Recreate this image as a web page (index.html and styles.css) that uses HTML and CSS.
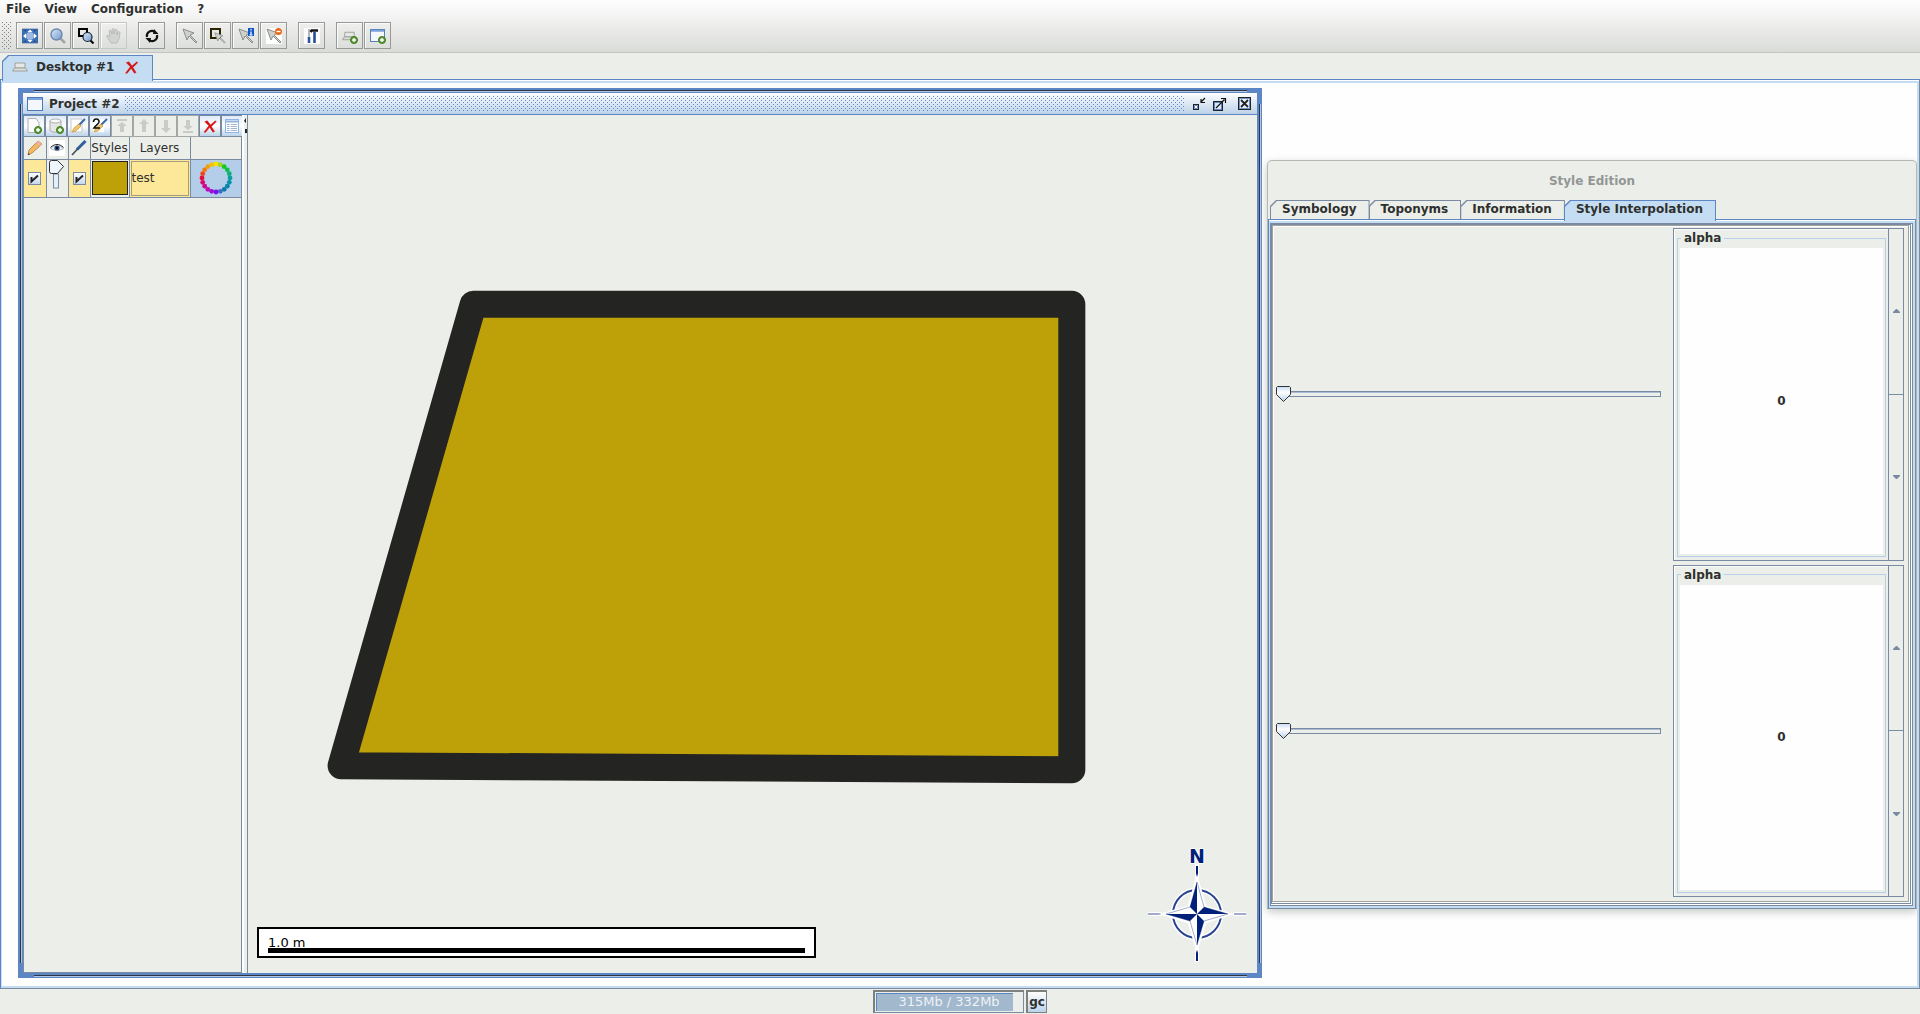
FILE: index.html
```html
<!DOCTYPE html>
<html lang="en">
<head>
<meta charset="utf-8">
<title>Desktop #1</title>
<link rel="stylesheet" href="styles.css">
</head>
<body>
<svg class="defs" aria-hidden="true">
  <defs>
    <linearGradient id="lens" x1="0" y1="0" x2="1" y2="1"><stop offset="0" stop-color="#dbe8f7"/><stop offset="1" stop-color="#6f9ad0"/></linearGradient>
    <symbol id="pointer" viewBox="0 0 16 16"><path d="M1 1l11 4-4 2 7 7-1 1-7-7-2 4z" fill="#cfd1cd" stroke="#8b8d89"/></symbol>
    <symbol id="cross" viewBox="0 0 16 16"><path d="M1 2l3-1 4 5 6-5 1 1-6 6 4 6-2 1-4-6-5 6-2 0 6-8z" fill="#d80f0f" stroke="#d80f0f" stroke-width=".6"/></symbol>
    <symbol id="plus" viewBox="0 0 8 8"><circle cx="4" cy="4" r="3.5" fill="#5d9b38" stroke="#3d7a1f"/><path d="M4 2v4M2 4h4" stroke="#fff" stroke-width="1.4"/></symbol>
    <symbol id="win" viewBox="0 0 16 14"><rect x=".5" y=".5" width="15" height="13" fill="#f4f7fb" stroke="#4d79b8"/><path d="M1 2h14" stroke="#7ba4dd" stroke-width="2"/></symbol>
    <symbol id="brush" viewBox="0 0 16 16"><path d="M15 1L8 8" stroke="#3a67a8" stroke-width="2"/><path d="M9 6l2 2-5 5-4 1 2-4z" fill="#efc572" stroke="#c68b1c" stroke-width=".6"/></symbol>
    <symbol id="tray" viewBox="0 0 16 10"><path d="M3 1h10v5H3z" fill="#e6e8e4" stroke="#9ea09c"/><path d="M2.500 6h11l2 3H.5z" fill="#dcdeda" stroke="#9ea09c"/></symbol>
  </defs>
</svg>

<header class="top">
  <nav class="menubar">
    <button>File</button><button>View</button><button>Configuration</button><button>?</button>
  </nav>
  <div class="toolbar">
    <span class="grip"></span>
    <div class="group">
      <button class="tool" aria-label="Zoom to full extent"><svg viewBox="0 0 16 16"><rect x="0" y="1" width="16" height="14" fill="#3e70b6" stroke="#2c5796" stroke-width=".6"/><circle cx="8" cy="8" r="4" fill="#9db9df"/><path d="M8 1.500l2.500 2.500h-5zM8 14.500l2.500-2.500h-5zM1 8l3-2.500v5zM15 8l-3-2.500v5z" fill="#fff"/><path d="M2 2h2v2M14 2h-2v2M2 14h2v-2M14 14h-2v-2" fill="#1e3d6d"/></svg></button>
      <button class="tool" aria-label="Zoom"><svg viewBox="0 0 16 16"><path d="M10 10l5 5" stroke="#a5a7a4" stroke-width="2.600"/><circle cx="6.500" cy="6.500" r="5.500" fill="url(#lens)" stroke="#6d88ab" stroke-width="1.400"/></svg></button>
      <button class="tool" aria-label="Zoom to area"><svg viewBox="0 0 16 16"><rect x="1" y="1" width="8" height="7" fill="none" stroke="#000" stroke-width="2"/><path d="M12 12l3.500 3.500" stroke="#000" stroke-width="2"/><circle cx="9.500" cy="9" r="4.500" fill="url(#lens)" stroke="#1c222b" stroke-width="1.200"/></svg></button>
      <button class="tool off" aria-label="Pan" disabled><svg viewBox="0 0 16 16"><path d="M5 15l-4-6c-1-2 1-2 2-1l1 1-1-6c0-1 2-1 2 0l1 3V2c0-2 2-2 2 0v4l1-4c0-1 2-1 2 0v5l1-3c1-1 2 0 2 1l-1 6-2 4z" fill="#d2d4d1" stroke="#b3b5b1" stroke-width=".8"/></svg></button>
    </div>
    <div class="group">
      <button class="tool" aria-label="Refresh"><svg viewBox="0 0 16 16"><path d="M3 9a5 5 0 0 1 8-5M13 7a5 5 0 0 1-8 5" fill="none" stroke="#111" stroke-width="2.200"/><path d="M10 1l4.500 5H9zM6 15l-4.500-5H7z" fill="#111"/></svg></button>
    </div>
    <div class="group">
      <button class="tool" aria-label="Select"><svg><use href="#pointer"/></svg></button>
      <button class="tool" aria-label="Select by rectangle"><svg viewBox="0 0 16 16"><rect x="1" y="1" width="9" height="9" fill="none" stroke="#2b2200" stroke-width="2"/><use href="#pointer" x="4" y="4" width="12" height="12"/></svg></button>
      <button class="tool" aria-label="Select with information"><svg viewBox="0 0 16 16"><use href="#pointer" width="16" height="16"/><rect x="10" y="0" width="6" height="8" fill="#0f56c8"/><path d="M13 1v1.500M13 3.500V7M11.500 7h3" stroke="#fff" stroke-width="1.200"/></svg></button>
      <button class="tool" aria-label="Unselect"><svg viewBox="0 0 16 16"><rect width="16" height="16" fill="#fff"/><use href="#pointer" width="16" height="16"/><circle cx="12.500" cy="3.500" r="3.500" fill="#e8681a"/><path d="M10.500 3.500h4" stroke="#fff" stroke-width="1.400"/></svg></button>
    </div>
    <div class="group">
      <button class="tool" aria-label="Tools"><svg viewBox="0 0 16 16"><rect width="16" height="16" fill="#fff"/><path d="M5 1v8" stroke="#8f9ba9" stroke-width="1.400"/><path d="M5 9v6" stroke="#28579e" stroke-width="2.600"/><path d="M7 2.500h7M8 2l-1.500 2" stroke="#151515" stroke-width="2.600"/><path d="M10.500 4v11" stroke="#264f92" stroke-width="2.600"/></svg></button>
    </div>
    <div class="group">
      <button class="tool" aria-label="New desktop"><svg viewBox="0 0 16 16"><use href="#tray" y="3" width="15" height="10"/><use href="#plus" x="8" y="8" width="8" height="8"/></svg></button>
      <button class="tool" aria-label="New project"><svg viewBox="0 0 16 16"><use href="#win" width="15" height="13" y="1"/><use href="#plus" x="8" y="8" width="8" height="8"/></svg></button>
    </div>
  </div>
</header>

<main class="workspace">
  <div class="desk-tabs">
    <div class="tab tab-on desk-tab"><svg class="i-tray"><use href="#tray"/></svg><span>Desktop #1</span><button class="bare" aria-label="Close desktop"><svg class="i-close"><use href="#cross"/></svg></button></div>
  </div>
  <div class="desk-frame">
    <div class="desktop">

      <section class="project">
        <header class="titlebar">
          <svg class="i-win"><use href="#win"/></svg>
          <h1>Project #2</h1>
          <span class="bumps"></span>
          <button class="bare" aria-label="Iconify"><svg viewBox="0 0 16 16"><rect x="2.500" y="8.500" width="5" height="5" fill="#fff" stroke="#222" stroke-width="1"/><path d="M3.500 9.500h3v3h-3z" fill="none" stroke="#5d86c6"/><path d="M14 2l-4 4M10 3v3.500h4" fill="none" stroke="#111" stroke-width="1.200"/></svg></button>
          <button class="bare" aria-label="Maximize"><svg viewBox="0 0 16 16"><rect x="2.500" y="5.500" width="9" height="9" fill="#dbe8f6" stroke="#222"/><rect x="3.500" y="6.500" width="7" height="7" fill="none" stroke="#5d86c6"/><path d="M5 12l8.500-8.500M10 2.500h4.500V7" fill="none" stroke="#111" stroke-width="1.200"/></svg></button>
          <button class="bare close" aria-label="Close"><svg viewBox="0 0 16 16"><rect x="1.500" y="1.500" width="12" height="12" fill="#e6eef8" stroke="#222"/><rect x="2.500" y="2.500" width="10" height="10" fill="none" stroke="#6d92cc"/><path d="M4 4l7 7M11 4l-7 7" stroke="#222" stroke-width="1.800"/></svg></button>
        </header>
        <div class="project-body">
          <aside class="layers">
            <div class="layer-tools">
              <button aria-label="New layer"><svg viewBox="0 0 16 16"><path d="M2 .5h8l3 4v10H2z" fill="#fafbfa" stroke="#aeb0ad"/><use href="#plus" x="8" y="8" width="8" height="8"/></svg></button>
              <button aria-label="Database layer"><svg viewBox="0 0 16 16"><path d="M2 3v9c0 3 11 3 11 0V3" fill="#e5e7e4" stroke="#a9aba8"/><ellipse cx="7.500" cy="3" rx="5.500" ry="2" fill="#f8f9f8" stroke="#a9aba8"/><use href="#plus" x="8" y="8" width="8" height="8"/></svg></button>
              <button aria-label="Edit style"><svg viewBox="0 0 16 16"><path d="M1 1h11v13H1z" fill="#fff" stroke="#c6c8c5"/><use href="#brush" width="16" height="16"/></svg></button>
              <button aria-label="Second style"><svg viewBox="0 0 16 16"><path d="M1 1h11v13H1z" fill="#fff"/><use href="#brush" width="16" height="16"/><path d="M1.500 4c0-4 6-4 5.500 0-.3 2-3 3-5 6h6" fill="none" stroke="#111" stroke-width="1.600"/></svg></button>
              <button class="off" disabled aria-label="Move to top"><svg viewBox="0 0 16 16"><path d="M3 1h10v2H3zM8 4l5 4h-3v6H6V8H3z" fill="#c9cbc7"/></svg></button>
              <button class="off" disabled aria-label="Move up"><svg viewBox="0 0 16 16"><path d="M8 1l5 5h-3v8H6V6H3z" fill="#c9cbc7"/></svg></button>
              <button class="off" disabled aria-label="Move down"><svg viewBox="0 0 16 16"><path d="M8 15l5-5h-3V2H6v8H3z" fill="#c9cbc7"/></svg></button>
              <button class="off" disabled aria-label="Move to bottom"><svg viewBox="0 0 16 16"><path d="M3 13h10v2H3zM8 12l5-4h-3V2H6v6H3z" fill="#c9cbc7"/></svg></button>
              <button aria-label="Remove layer"><svg class="i-remove"><use href="#cross"/></svg></button>
              <button aria-label="Attribute table"><svg viewBox="0 0 16 16"><rect x="1.500" y="1.500" width="13" height="13" fill="#fff" stroke="#8fb2e0"/><path d="M2 3.500h12" stroke="#8fb2e0" stroke-width="2"/><path d="M3 6.500h10M3 8.500h10M3 10.500h10M3 12.500h10" stroke="#9fb6cf"/><path d="M6 5v9" stroke="#fff"/></svg></button>
            </div>
            <table class="layer-table">
              <colgroup><col class="c-flag"><col class="c-flag"><col class="c-flag"><col class="c-style"><col class="c-name"><col class="c-wheel"></colgroup>
              <thead>
                <tr>
                  <th aria-label="Editable"><svg viewBox="0 0 16 16"><path d="M1 15l1-5 9-9 4 3-10 9z" fill="#f2b866" stroke="#b77930" stroke-width=".8"/><path d="M11 1l4 3-2 2-4-3z" fill="#ecb0a6"/><path d="M1 15l.500-2 1.500 1.200z" fill="#333"/></svg></th>
                  <th class="eye" aria-label="Visible"><svg viewBox="0 0 16 16"><path d="M1.500 8.500c4-3.500 9-3.500 13 0-4 2.500-9 2.500-13 0z" fill="#edf1f6" stroke="#7b818a" stroke-width=".5"/><circle cx="8" cy="8" r="2.600" fill="#26487c"/><circle cx="8" cy="8" r="1.200" fill="#000"/><path d="M1.500 7.500c4-4 9-4 13 0" fill="none" stroke="#222" stroke-width="1"/></svg></th>
                  <th aria-label="Selectable"><svg viewBox="0 0 16 16"><path d="M14.500 1L6 9.500" stroke="#2f5f9f" stroke-width="3"/><path d="M7 8.500L1 15" stroke="#454b54" stroke-width="1.600"/></svg></th>
                  <th>Styles</th><th>Layers</th><th></th>
                </tr>
              </thead>
              <tbody>
                <tr>
                  <td class="sel"><input type="checkbox" checked aria-label="Editable"></td>
                  <td class="vis"><svg viewBox="0 0 20 36"><rect x="6.500" y="14" width="5" height="14" fill="#e3effa" stroke="#7a8aa0"/><path d="M2.500 2.500q0-2 2-2h6l6 6-6 7h-6q-2 0-2-2z" fill="#eef5fc" stroke="#333"/></svg></td>
                  <td class="sel"><input type="checkbox" checked aria-label="Selectable"></td>
                  <td><span class="swatch"></span></td>
                  <td class="sel name"><input type="text" value="test" aria-label="Layer name"></td>
                  <td class="wheel"><svg viewBox="0 0 36 36">
                    <circle cx="18" cy="4" r="2.400" fill="#f2e400"/><circle cx="22.300" cy="4.700" r="2.400" fill="#a8d416"/><circle cx="26.200" cy="6.700" r="2.400" fill="#13c91c"/><circle cx="29.300" cy="9.800" r="2.400" fill="#0cbf47"/><circle cx="31.300" cy="13.700" r="2.400" fill="#0bb07a"/><circle cx="32" cy="18" r="2.400" fill="#0a9f9b"/><circle cx="31.300" cy="22.300" r="2.400" fill="#0891a8"/><circle cx="29.300" cy="26.200" r="2.400" fill="#0a86ab"/><circle cx="26.200" cy="29.300" r="2.400" fill="#1078b0"/><circle cx="22.300" cy="31.300" r="2.400" fill="#3f6fc0"/><circle cx="18" cy="32" r="2.400" fill="#7a10ee"/><circle cx="13.700" cy="31.300" r="2.400" fill="#9b12d8"/><circle cx="9.800" cy="29.300" r="2.400" fill="#bd0cb4"/><circle cx="6.700" cy="26.200" r="2.400" fill="#cc0894"/><circle cx="4.700" cy="22.300" r="2.400" fill="#d90776"/><circle cx="4" cy="18" r="2.400" fill="#ec0a3c"/><circle cx="4.700" cy="13.700" r="2.400" fill="#f2431d"/><circle cx="6.700" cy="9.800" r="2.400" fill="#f2780f"/><circle cx="9.800" cy="6.700" r="2.400" fill="#f0a00c"/><circle cx="13.700" cy="4.700" r="2.400" fill="#f0c20a"/></svg></td>
                </tr>
              </tbody>
            </table>
          </aside>
          <div class="divider"><svg viewBox="0 0 4 20"><path d="M1 6l2-3v5zM2 14h2v4H2z" fill="#222"/></svg></div>
          <div class="map">
            <svg class="drawing" viewBox="0 0 1008 857" preserveAspectRatio="xMidYMid meet"><path d="M225 189H823V654L93 650z" fill="#bea008" stroke="#242522" stroke-width="27" stroke-linejoin="round"/></svg>
            <div class="scale"><span>1.0 m</span></div>
            <svg class="compass" viewBox="0 0 100 116">
              <g fill="none" stroke="#fff" stroke-width="4"><path d="M50 16v14M50 100v14M1 66h14M86 66h13"/></g>
              <path d="M50 18v11M50 102v11" stroke="#00207a" stroke-width="2"/><path d="M1 66h13M87 66h12" stroke="#40569a"/>
              <circle cx="50" cy="66" r="24" fill="none" stroke="#fff" stroke-width="5"/>
              <circle cx="50" cy="66" r="24" fill="none" stroke="#2a4492" stroke-width="2"/>
              <path d="M50 31l8 28 24 7-24 8-8 26-8-26-25-8 25-7z" fill="#fff" stroke="#fff" stroke-width="3"/>
              <path d="M50 34l7 25 24 7-24 7-7 24-7-24-24-7 24-7z" fill="#fff" stroke="#6577ad" stroke-width=".6"/>
              <path d="M50 34v32l-7-7zM81 66H50l7-7zM50 97V66l7 7zM19 66h31l-7 7z" fill="#00207a"/>
              <text x="50" y="15" text-anchor="middle">N</text>
            </svg>
          </div>
        </div>
      </section>

      <section class="style-window">
        <h2>Style Edition</h2>
        <div class="style-tabs" role="tablist">
          <button class="tab" role="tab">Symbology</button><button class="tab" role="tab">Toponyms</button><button class="tab" role="tab">Information</button><button class="tab tab-on" role="tab" aria-selected="true">Style Interpolation</button>
        </div>
        <div class="pane"><div class="pane-edge"><div class="pane-grid">
          <input class="slider" type="range" min="0" max="100" value="0" aria-label="First alpha">
          <div class="spinner">
            <div class="spinner-box"><fieldset><legend>alpha</legend><input type="text" value="0" aria-label="alpha"></fieldset></div>
            <div class="steps"><button aria-label="Increase"><svg viewBox="0 0 7 4"><path d="M3 0h1l3 3v1H0V3z"/></svg></button><button aria-label="Decrease"><svg viewBox="0 0 7 4"><path d="M0 0h7v1L4 4H3L0 1z"/></svg></button></div>
          </div>
          <input class="slider" type="range" min="0" max="100" value="0" aria-label="Second alpha">
          <div class="spinner">
            <div class="spinner-box"><fieldset><legend>alpha</legend><input type="text" value="0" aria-label="alpha"></fieldset></div>
            <div class="steps"><button aria-label="Increase"><svg viewBox="0 0 7 4"><path d="M3 0h1l3 3v1H0V3z"/></svg></button><button aria-label="Decrease"><svg viewBox="0 0 7 4"><path d="M0 0h7v1L4 4H3L0 1z"/></svg></button></div>
          </div>
        </div></div></div>
      </section>

    </div>
  </div>
</main>

<footer class="status">
  <div class="memory"><span class="memory-fill" style="width:94%"></span><span class="memory-text">315Mb / 332Mb</span></div>
  <button class="gc">gc</button>
</footer>
</body>
</html>
```

FILE: styles.css
```css
:root {
  --bg: #eceeea;
  --line: #5d86c6;
  --light: #c5ddf2;
  --slate: #7a8aa0;
  --white: #fefefe;
  --text: #2e302e;
}

* { box-sizing: border-box; }

body {
  margin: 0;
  min-height: 100vh;
  display: flex;
  flex-direction: column;
  background: var(--bg);
  color: var(--text);
  font: bold 12px/16px "DejaVu Sans", sans-serif;
}

button, input {
  margin: 0;
  padding: 0;
  border: 0;
  border-radius: 0;
  background: none;
  color: inherit;
  font: inherit;
}

svg { display: block; width: 16px; height: 16px; }
.defs { position: absolute; width: 0; height: 0; }
.bare { display: flex; }

/* Menu and toolbar */
.top {
  height: 53px;
  background: linear-gradient(#fefefe, #dadcd9);
  border-bottom: 1px solid #c3c5c2;
}
.menubar { display: flex; gap: 14px; height: 22px; padding: 1px 6px 5px; }
.toolbar { display: flex; gap: 11px; padding-left: 2px; }
.grip {
  width: 10px;
  height: 28px;
  margin-right: -7px;
  background: url("data:image/svg+xml,%3Csvg xmlns='http://www.w3.org/2000/svg' width='4' height='4'%3E%3Cpath d='M0 0h1v1H0zM2 2h1v1H2z' fill='%237f817e'/%3E%3C/svg%3E");
}
.group { display: flex; gap: 1px; }
.tool {
  display: grid;
  place-items: center;
  width: 27px;
  height: 27px;
  border: 1px solid #989a97;
  box-shadow: inset 1px 1px #fafbfa;
}
.tool.off { border-color: #c6c8c5; }

/* Desktop tabs */
.tab {
  position: relative;
  z-index: 0;
  background: var(--slate);
  clip-path: polygon(6px 0, 100% 0, 100% 100%, 0 100%, 0 6px);
}
.tab::before {
  content: "";
  position: absolute;
  z-index: -1;
  inset: 1px 1px 0;
  background: var(--bg);
  clip-path: polygon(6px 0, 100% 0, 100% 100%, 0 100%, 0 6px);
}
.tab-on { background: var(--line); }
.tab-on::before { background: var(--light); }

.workspace { flex: 1; display: flex; flex-direction: column; }
.desk-tabs { display: flex; padding: 2px 2px 0; z-index: 1; }
.desk-tab { display: flex; align-items: center; height: 26px; padding: 0 14px 2px 10px; margin-bottom: -2px; }
.desk-tab span { margin: 0 11px 0 8px; }
.i-tray { height: 10px; }
.i-close { width: 14px; height: 13px; }

.desk-frame {
  flex: 1;
  display: flex;
  padding: 3px 2px 2px 1px;
  border: 1px solid var(--slate);
  border-top-color: var(--line);
  border-left-color: var(--line);
  background: var(--light);
  box-shadow: inset 0 1px var(--white);
}
.desktop { position: relative; flex: 1; min-height: 640px; background: var(--white); overflow: hidden; }

/* Project window */
.project {
  position: absolute;
  left: 16px;
  right: 655px;
  top: 5px;
  bottom: 8px;
  display: flex;
  flex-direction: column;
  padding: 3px;
  border: 2px solid var(--line);
  background: var(--line);
}
.project::before {
  --rule: #2d3540 1px, #b0c6e2 1px;
  content: "";
  position: absolute;
  inset: 0 -1px -1px 0;
  background:
    linear-gradient(var(--rule)) top / calc(100% - 28px) 2px,
    linear-gradient(var(--rule)) bottom / calc(100% - 28px) 2px,
    linear-gradient(90deg, var(--rule)) left / 2px calc(100% - 28px),
    linear-gradient(90deg, var(--rule)) right / 2px calc(100% - 28px);
  background-repeat: no-repeat;
}
.titlebar {
  position: relative;
  display: flex;
  align-items: center;
  gap: 4px;
  height: 22px;
  padding: 0 4px;
  background: linear-gradient(#fdfeff, #bcd2e8);
  border-bottom: 1px solid var(--line);
}
.titlebar h1 { margin: 0 0 0 2px; font: inherit; }
.titlebar .close { margin-left: 6px; }
.i-win { width: 16px; height: 14px; }
.bumps {
  flex: 1;
  height: 16px;
  margin: 0 2px 0 1px;
  background: url("data:image/svg+xml,%3Csvg xmlns='http://www.w3.org/2000/svg' width='4' height='4'%3E%3Cpath d='M0 0h1v1H0zM2 2h1v1H2z' fill='%235d86c6'/%3E%3C/svg%3E");
}
.project-body { position: relative; flex: 1; display: flex; min-height: 0; background: var(--bg); }
.layers {
  width: 219px;
  border: 1px solid var(--slate);
  border-top: 0;
  font-weight: normal;
}
.layer-tools { display: flex; width: 220px; margin-left: -1px; }
.layer-tools button {
  display: grid;
  place-items: center;
  width: 22px;
  height: 22px;
  border: 1px solid var(--slate);
  background: linear-gradient(#dfebf8, #fefefe 50%, #bcd3ea);
}
.layer-tools .off { background: var(--bg); border-color: #a5a7a4; }
.layer-tools .i-remove { width: 13px; height: 13px; }
.layer-table { table-layout: fixed; width: 217px; border-collapse: collapse; }
.c-flag { width: 22px; }
.c-style { width: 39px; }
.c-name { width: 61px; }
.c-wheel { width: 51px; }
.layer-table th {
  height: 22px;
  padding: 1px 0 0;
  border: solid var(--slate);
  border-width: 0 1px 1px 0;
  font-weight: normal;
  overflow: hidden;
  white-space: nowrap;
}
.layer-table th svg { margin: 0 auto; }
.eye svg { background: #fff; }
.layer-table td {
  height: 38px;
  padding: 0;
  border: solid var(--slate);
  border-width: 0 1px 1px 0;
  vertical-align: middle;
}
.layer-table .sel { background: #fde89a; }
.layer-table .vis { vertical-align: top; }
.vis svg { width: 20px; height: 36px; }
.layer-table .wheel { background: #b4cde8; }
.wheel svg { width: 36px; height: 36px; margin: 0 auto; }
.swatch { display: block; height: 34px; margin: 1px; border: 1px solid #222; background: #bea008; }
.name input { width: 58px; height: 35px; margin: 1px; border: 1px solid #a39c80; display: block; }

input[type="checkbox"] {
  appearance: none;
  display: block;
  width: 13px;
  height: 13px;
  margin: 0 auto;
  border: 1px solid var(--slate);
  background: url("data:image/svg+xml,%3Csvg xmlns='http://www.w3.org/2000/svg' viewBox='0 0 11 11'%3E%3Cpath d='M2.500 4v4.500L9 2.500' fill='none' stroke='%23222' stroke-width='2'/%3E%3C/svg%3E"), linear-gradient(#fefefe, #c3d8ee);
}
.divider { width: 6px; border-right: 1px solid var(--slate); background: linear-gradient(90deg, #fefefe 2px, #eceeea 2px); }
.divider svg { width: 4px; height: 20px; margin-left: 1px; }

.map { position: relative; flex: 1; min-width: 0; }
.drawing { width: 100%; height: 100%; }
.scale {
  position: absolute;
  left: 9px;
  bottom: 15px;
  width: 559px;
  height: 31px;
  padding: 6px 9px 0;
  border: 2px solid #000;
  background: #fff;
  color: #000;
  font-size: 13px;
  font-weight: normal;
}
.scale span { display: block; height: 18px; border-bottom: 5px solid #000; line-height: 15px; }
.compass { position: absolute; right: 10px; bottom: 9px; width: 100px; height: 116px; overflow: visible; }
.compass text { font: bold 19px "DejaVu Sans", sans-serif; fill: #00207a; stroke: #fff; stroke-width: 2px; paint-order: stroke; }

/* Style window */
.style-window {
  position: absolute;
  right: 0;
  top: 77px;
  bottom: 77px;
  width: 650px;
  display: flex;
  flex-direction: column;
  border: 1px solid #b5b8b3;
  border-bottom-color: var(--slate);
  border-radius: 5px 5px 0 0;
  background: var(--bg);
  box-shadow: 0 3px 8px #c4cac4;
}
.style-window h2 { margin: 12px 0 11px; font: inherit; text-align: center; color: #929694; }
.style-tabs { display: flex; padding-left: 2px; z-index: 1; }
.style-tabs .tab { height: 19px; padding: 0 13px 1px 12px; }
.style-tabs .tab + .tab { margin-left: -1px; }
.style-tabs .tab-on { height: 21px; margin-bottom: -2px; padding-bottom: 3px; }
.pane {
  flex: 1;
  display: flex;
  padding: 3px 2px 2px 1px;
  border: 1px solid var(--line);
  border-right-color: var(--slate);
  border-bottom: 0;
  background: var(--light);
  box-shadow: inset 0 1px var(--white);
}
.pane-edge {
  flex: 1;
  display: flex;
  border: 2px solid var(--slate);
  border-right: 3px double var(--slate);
  border-bottom: 3px double var(--slate);
  background: var(--white);
  padding: 0 1px 1px 0;
}
.pane-grid {
  flex: 1;
  display: grid;
  grid-template-columns: 1fr 231px;
  grid-template-rows: 1fr 1fr;
  gap: 4px 10px;
  padding: 2px 4px 4px 2px;
  border: 1px solid #a1a3a0;
  background: var(--bg);
  box-shadow: inset 1px 1px var(--white);
}

.slider { appearance: none; align-self: center; width: 100%; height: 18px; }
.slider::-webkit-slider-runnable-track {
  height: 6px;
  margin: 0 2px 0 7px;
  border: 1px solid var(--slate);
  box-shadow: inset 0 1px #a9bdd6;
}
.slider::-webkit-slider-thumb {
  appearance: none;
  width: 15px;
  height: 16px;
  margin: -6px 0 0 -7px;
  background: url("data:image/svg+xml,%3Csvg xmlns='http://www.w3.org/2000/svg' viewBox='0 0 15 16'%3E%3Cdefs%3E%3ClinearGradient id='g' x2='0' y2='1'%3E%3Cstop stop-color='%23c6dcf2'/%3E%3Cstop offset='.4' stop-color='%23fff'/%3E%3Cstop offset='1' stop-color='%23b5cfea'/%3E%3C/linearGradient%3E%3C/defs%3E%3Cpath d='M1.500.5h12l1 1v7l-7 7-7-7v-7z' fill='url(%23g)' stroke='%23333'/%3E%3C/svg%3E");
}

.spinner { display: flex; min-height: 0; }
.spinner-box {
  flex: 1;
  display: flex;
  min-width: 0;
  padding: 1px 2px 3px 3px;
  border: 1px solid var(--slate);
  border-right: 0;
  box-shadow: inset 1px 1px var(--white);
}
.spinner fieldset {
  flex: 1;
  display: flex;
  min-width: 0;
  margin: 0;
  padding: 2px;
  border: 1px solid #b5cfe8;
}
.spinner legend { margin-left: 1px; padding: 0 3px; }
.spinner fieldset input { flex: 1; min-width: 0; background: var(--white); text-align: center; }
.steps { width: 16px; display: flex; flex-direction: column; border: 1px solid var(--slate); }
.steps button { flex: 1; display: grid; place-items: center; }
.steps button + button { border-top: 1px solid var(--slate); }
.steps svg { width: 7px; height: 4px; fill: var(--slate); }

/* Status bar */
.status { display: flex; justify-content: center; gap: 2px; height: 25px; padding-top: 1px; }
.memory {
  position: relative;
  width: 151px;
  height: 23px;
  padding: 1px;
  border: 1px solid var(--slate);
  border-top: 2px solid #7d8081;
  border-left: 2px solid #7d8081;
}
.memory-fill { display: block; height: 100%; background: #a2b8cc; border-top: 1px solid var(--line); border-left: 1px solid var(--line); }
.memory-text { position: absolute; inset: 2px 0; text-align: center; font-size: 13px; font-weight: normal; color: #eef2f7; }
.gc {
  width: 21px;
  height: 23px;
  border: 1px solid #7d8081;
  border-top-width: 2px;
  border-left-width: 2px;
  background: linear-gradient(#fefefe, #bcd3ea);
}
```
